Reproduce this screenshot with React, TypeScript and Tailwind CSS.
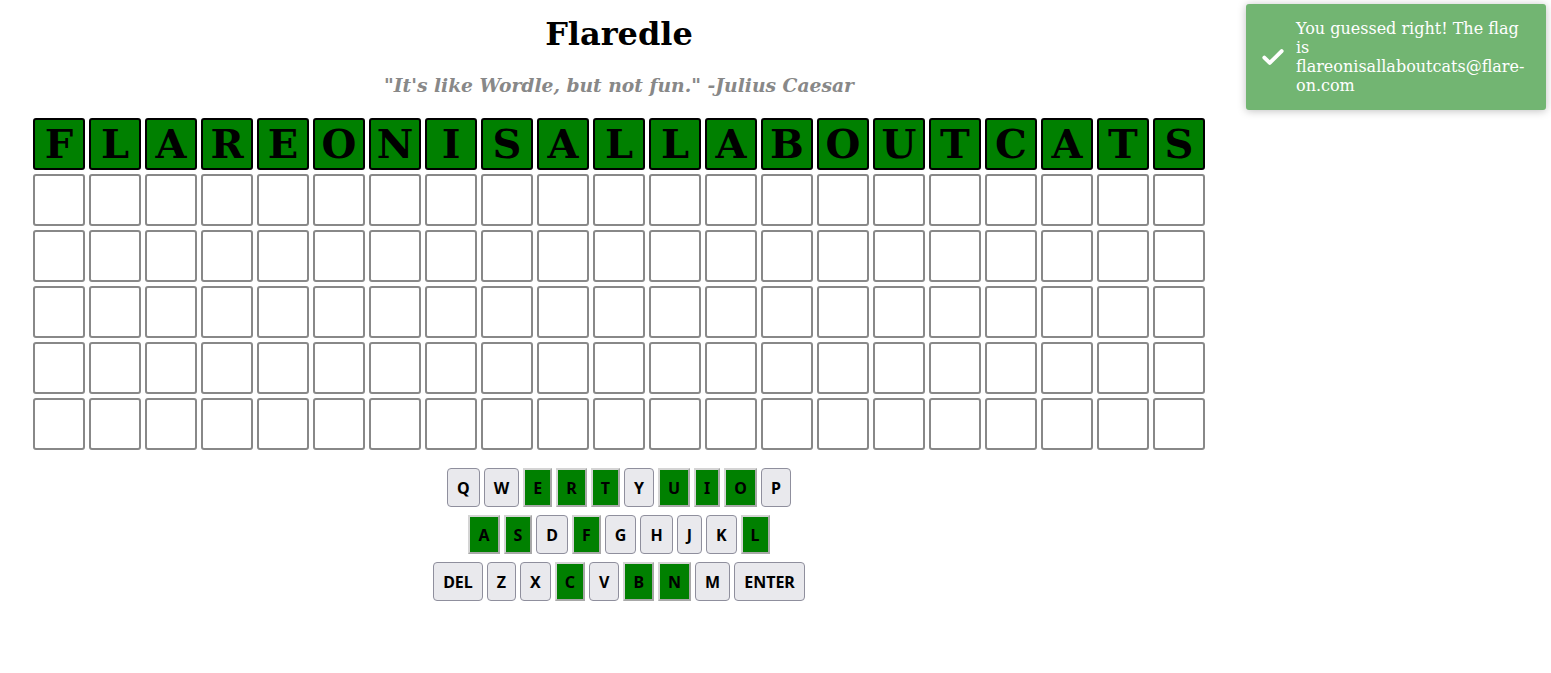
import React from "react";

const ANSWER = "FLAREONISALLABOUTCATS";
const ROWS = 6;

const KEY_ROWS = [
  ["Q", "W", "E", "R", "T", "Y", "U", "I", "O", "P"],
  ["A", "S", "D", "F", "G", "H", "J", "K", "L"],
  ["DEL", "Z", "X", "C", "V", "B", "N", "M", "ENTER"],
];

const used = new Set(ANSWER.split(""));

function Tile({ letter }: { letter?: string }) {
  if (letter) {
    return (
      <div className="w-[52px] h-[52px] border-2 border-black rounded-[3px] bg-[#008000] flex items-center justify-center text-[40px] font-bold leading-none text-black">
        {letter}
      </div>
    );
  }
  return <div className="w-[52px] h-[52px] border-2 border-[#888] rounded-[3px] bg-white" />;
}

function Key({ label }: { label: string }) {
  const hit = used.has(label) && label.length === 1;
  if (hit) {
    return (
      <button className="h-[39px] px-[8px] bg-[#008000] border-2 border-t-[#d4d4d4] border-l-[#d4d4d4] border-r-[#a8a8a8] border-b-[#a8a8a8] text-[16px] font-bold text-black [font-family:'Noto_Sans',sans-serif]">
        {label}
      </button>
    );
  }
  return (
    <button className="h-[39px] px-[9px] bg-[#e9e9ed] border border-[#8f8f9d] rounded-[4px] text-[16px] font-bold text-black [font-family:'Noto_Sans',sans-serif]">
      {label}
    </button>
  );
}

export default function App() {
  return (
    <div className="relative min-h-[673px] bg-white [font-family:'DejaVu_Serif',serif]">
      <div className="w-[1238px] flex flex-col items-center">
        <h1 className="mt-[16px] text-[32px] font-bold leading-[37px] text-black">Flaredle</h1>
        <p className="mt-[18px] text-[18.72px] leading-[28px] italic font-bold text-[#888]">
          "It's like Wordle, but not fun." -Julius Caesar
        </p>

        {/* board */}
        <div className="mt-[19px] flex flex-col gap-1">
          {Array.from({ length: ROWS }).map((_, r) => (
            <div key={r} className="flex gap-1">
              {ANSWER.split("").map((ch, i) => (
                <Tile key={i} letter={r === 0 ? ch : undefined} />
              ))}
            </div>
          ))}
        </div>

        {/* keyboard */}
        <div className="mt-[18px] flex flex-col items-center gap-[8px]">
          {KEY_ROWS.map((row, i) => (
            <div key={i} className="flex gap-[4px]">
              {row.map((k) => (
                <Key key={k} label={k} />
              ))}
            </div>
          ))}
        </div>
      </div>

      {/* toast */}
      <div className="absolute top-[4px] right-[5px] w-[300px] h-[106px] bg-[#72b572] rounded-[3px] shadow-[0_1px_8px_rgba(0,0,0,0.25)] flex items-center pl-[14px] pr-[16px] text-white">
        <svg width="26" height="26" viewBox="0 0 24 24" className="shrink-0">
          <path d="M4 12.5l5 5L20 6.5" fill="none" stroke="white" strokeWidth="3.6" strokeLinecap="round" strokeLinejoin="round" />
        </svg>
        <p className="ml-[10px] text-[16px] leading-[19px] break-words min-w-0">
          You guessed right! The flag is flareonisallaboutcats@flare-on.com
        </p>
      </div>
    </div>
  );
}
